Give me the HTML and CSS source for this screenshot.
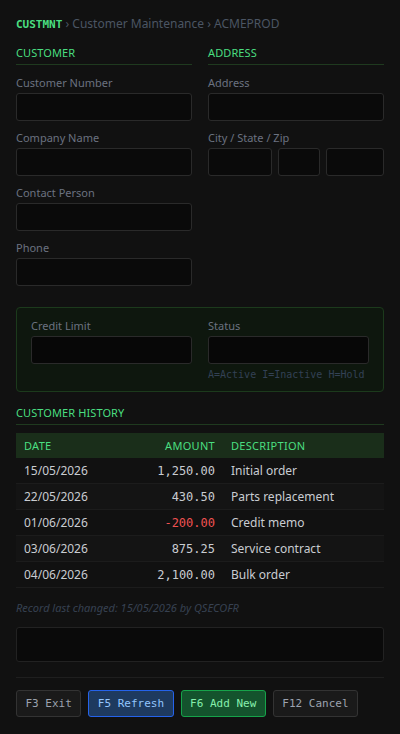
FILE: index.html
```html
<!DOCTYPE html>
<html>
<head>
<meta charset="utf-8">
<link rel="stylesheet" href="styles.css">
</head>
<body>
<div class="screen">
  <div class="crumb"><span class="pgm">CUSTMNT</span> <span class="sep">›</span> Customer Maintenance <span class="sep">›</span> ACMEPROD</div>

  <div class="cols">
    <div class="col">
      <div class="sec">Customer</div>
      <div class="field"><div class="lbl">Customer Number</div><div class="inp"></div></div>
      <div class="field"><div class="lbl">Company Name</div><div class="inp"></div></div>
      <div class="field"><div class="lbl">Contact Person</div><div class="inp"></div></div>
      <div class="field"><div class="lbl">Phone</div><div class="inp"></div></div>
    </div>
    <div class="col">
      <div class="sec">Address</div>
      <div class="field"><div class="lbl">Address</div><div class="inp"></div></div>
      <div class="field"><div class="lbl">City / State / Zip</div>
        <div class="csz"><div class="inp"></div><div class="inp"></div><div class="inp"></div></div>
      </div>
    </div>
  </div>

  <div class="credit">
    <div class="cfield"><div class="lbl">Credit Limit</div><div class="inp"></div></div>
    <div class="cfield"><div class="lbl">Status</div><div class="inp"></div><div class="hint">A=Active I=Inactive H=Hold</div></div>
  </div>

  <div class="sec hist">Customer History</div>
  <table class="tbl">
    <thead><tr><th class="c-date">DATE</th><th class="c-amt">AMOUNT</th><th class="c-desc">DESCRIPTION</th></tr></thead>
    <tbody>
      <tr><td>15/05/2026</td><td class="amt">1,250.00</td><td>Initial order</td></tr>
      <tr><td>22/05/2026</td><td class="amt">430.50</td><td>Parts replacement</td></tr>
      <tr><td>01/06/2026</td><td class="amt neg">-200.00</td><td>Credit memo</td></tr>
      <tr><td>03/06/2026</td><td class="amt">875.25</td><td>Service contract</td></tr>
      <tr><td>04/06/2026</td><td class="amt">2,100.00</td><td>Bulk order</td></tr>
    </tbody>
  </table>

  <div class="changed">Record last changed: 15/05/2026 by QSECOFR</div>
  <div class="msg"></div>

  <div class="keys">
    <button class="key">F3 Exit</button>
    <button class="key blue">F5 Refresh</button>
    <button class="key green">F6 Add New</button>
    <button class="key">F12 Cancel</button>
  </div>
</div>
</body>
</html>
```

FILE: styles.css
```css
html, body {
  margin: 0;
  padding: 0;
  background: #111111;
}
body {
  font-family: "Noto Sans", sans-serif;
  color: #d1d5db;
}
.screen {
  padding: 15px 16px 16px;
}
.crumb {
  font-size: 12px;
  line-height: 18px;
  color: #4b5563;
}
.crumb .pgm {
  font-family: "DejaVu Sans Mono", monospace;
  font-size: 11px;
  font-weight: bold;
  color: #4ade80;
}
.crumb .sep { color: #4b5563; }
.cols {
  display: grid;
  grid-template-columns: 1fr 1fr;
  gap: 16px;
  margin-top: 11px;
}
.sec {
  font-size: 11px;
  line-height: 16px;
  letter-spacing: 0.1px;
  text-transform: uppercase;
  color: #4ade80;
  padding-bottom: 3px;
  border-bottom: 1px solid #1f3a1f;
  margin-bottom: 10px;
}
.field {
  margin-bottom: 9px;
}
.lbl {
  font-size: 11px;
  line-height: 16px;
  color: #6b7280;
  margin-bottom: 2px;
}
.inp {
  height: 26px;
  background: #0a0a0a;
  border: 1px solid #2a2a2a;
  border-radius: 3px;
}
.csz {
  display: grid;
  grid-template-columns: 64px 42px 1fr;
  gap: 6px;
}
.credit {
  margin-top: 12px;
  border: 1px solid #1c3a1c;
  background: #0e170e;
  border-radius: 4px;
  padding: 10px 14px 9px;
  display: grid;
  grid-template-columns: 1fr 1fr;
  gap: 16px;
}
.credit .inp {
  background: #070707;
}
.hint {
  font-family: "DejaVu Sans Mono", monospace;
  font-size: 10px;
  line-height: 14px;
  color: #334155;
  margin-top: 4px;
}
.hist {
  margin-top: 13px;
  margin-bottom: 8px;
}
.tbl {
  width: 100%;
  border-collapse: collapse;
  table-layout: fixed;
  font-size: 12px;
}
.tbl th {
  background: #1a2e1a;
  color: #4ade80;
  font-weight: normal;
  font-size: 11px;
  letter-spacing: 0.3px;
  height: 25px;
  padding: 0 8px;
  text-align: left;
}
.tbl th.c-date { width: 91px; }
.tbl th.c-amt { text-align: right; width: 84px; }
.tbl td {
  height: 25px;
  padding: 0 8px;
  border-bottom: 1px solid #1c1c1c;
  color: #c9ccd1;
  white-space: nowrap;
}
.tbl tbody tr:nth-child(even) td { background: #141414; }
.tbl td.amt {
  text-align: right;
  font-family: "DejaVu Sans Mono", monospace;
  color: #c9ccd1;
}
.tbl td.amt.neg { color: #f05252; }
.changed {
  margin-top: 12px;
  font-size: 11px;
  font-style: italic;
  color: #374151;
  line-height: 15px;
}
.msg {
  margin-top: 12px;
  height: 33px;
  background: #0a0a0a;
  border: 1px solid #222;
  border-radius: 3px;
}
.keys {
  margin-top: 15px;
  padding-top: 12px;
  border-top: 1px solid #1f1f1f;
  display: flex;
  gap: 7px;
}
.key {
  font-family: "DejaVu Sans Mono", monospace;
  font-size: 11px;
  height: 27px;
  padding: 0 8.5px;
  background: #1a1a1a;
  border: 1px solid #333;
  border-radius: 3px;
  color: #9ca3af;
}
.key.blue {
  background: #1e3a5f;
  border-color: #2563eb;
  color: #93c5fd;
}
.key.green {
  background: #14532d;
  border-color: #16a34a;
  color: #86efac;
}
```
